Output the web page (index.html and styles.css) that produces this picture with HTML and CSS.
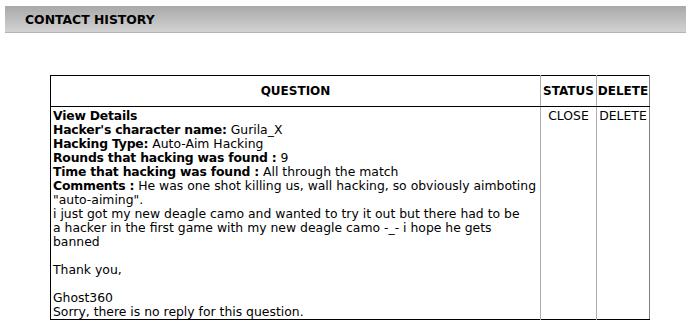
FILE: index.html
```html
<!DOCTYPE html>
<html lang="en">

<head>
    <meta charset="UTF-8">
    <title>Contact History</title>
    <link rel="stylesheet" href="styles.css">
</head>

<body>
    <div class="title-bar">CONTACT HISTORY</div>

    <div class="history">
        <table class="history-table">
            <colgroup>
                <col class="col-question">
                <col class="col-status">
                <col class="col-delete">
            </colgroup>
            <tr class="head">
                <th>QUESTION</th>
                <th>STATUS</th>
                <th>DELETE</th>
            </tr>
            <tr>
                <td class="question">
                    <b>View Details</b><br>
                    <b>Hacker's character name:</b> Gurila_X<br>
                    <b>Hacking Type:</b> Auto-Aim Hacking<br>
                    <b>Rounds that hacking was found :</b> 9<br>
                    <b>Time that hacking was found :</b> All through the match<br>
                    <b>Comments :</b> He was one shot killing us, wall hacking, so obviously aimboting<br>
                    "auto-aiming".<br>
                    i just got my new deagle camo and wanted to try it out but there had to be<br>
                    a hacker in the first game with my new deagle camo -_- i hope he gets<br>
                    banned<br>
                    <br>
                    Thank you,<br>
                    <br>
                    Ghost360<br>
                    Sorry, there is no reply for this question.
                </td>
                <td class="status">CLOSE</td>
                <td class="delete">DELETE</td>
            </tr>
        </table>
    </div>
</body>

</html>
```

FILE: styles.css
```css
body {
    margin: 0;
    padding: 6px 0 0 5px;
    font-family: "DejaVu Sans", Tahoma, sans-serif;
    font-size: 12.4px;
    color: #000;
    background: #fff;
}

.title-bar {
    height: 26px;
    line-height: 28px;
    padding-left: 20px;
    background: linear-gradient(#a9a9a9, #d2d2d2);
    border-bottom: 1px solid #b4b4b4;
    font-weight: bold;
    font-size: 12.4px;
}

.history {
    padding: 42px 0 0 45px;
}

.history-table {
    width: 600px;
    table-layout: fixed;
    border-collapse: collapse;
    border: 1px solid #000;
    border-right-color: #808080;
    line-height: 14px;
}

.col-question { width: 490px; }
.col-status { width: 56px; }
.col-delete { width: 53px; }

.history-table th {
    height: 30px;
    padding: 0;
    font-size: 12px;
    text-align: center;
    vertical-align: middle;
    white-space: nowrap;
    border-bottom: 1px solid #000;
}

.history-table th + th {
    border-left: 1px solid #b0b0b0;
}

.history-table td {
    padding: 2px 2px 0 2px;
    vertical-align: top;
}

.history-table td.question {
    white-space: nowrap;
}

.history-table .status,
.history-table .delete {
    text-align: center;
    border-left: 1px solid #b0b0b0;
}

.history-table td b {
    letter-spacing: -0.2px;
}
```
